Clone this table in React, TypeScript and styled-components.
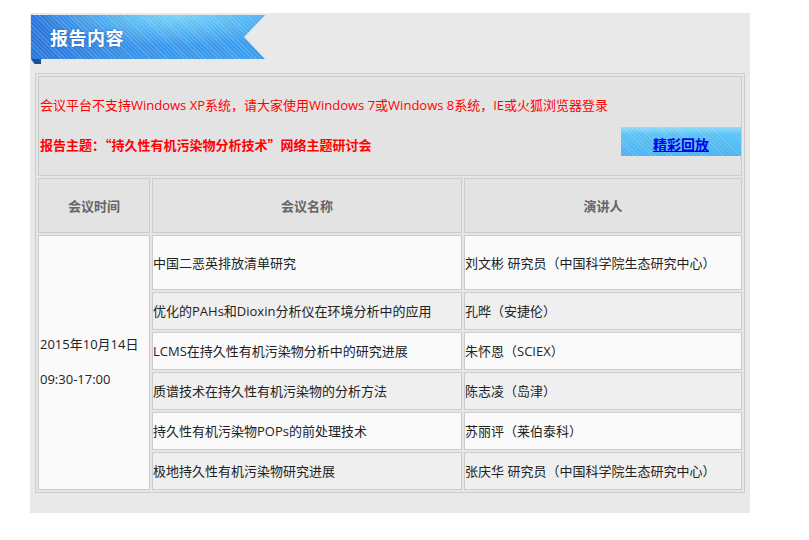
import React from "react";
import styled, { createGlobalStyle } from "styled-components";

const GlobalStyle = createGlobalStyle`
  html, body { margin: 0; padding: 0; background: #ffffff; }
  * { box-sizing: border-box; }
  body {
    font-family: "Open Sans", "Noto Sans CJK SC", sans-serif;
    font-size: 13px;
    color: #222;
  }
`;

const Page = styled.div`
  padding: 13px 0 0 30px;
`;

const Panel = styled.div`
  width: 720px;
  height: 500px;
  background: #e9e9e9;
  padding: 2px 6px 20px 1px;
`;

const RibbonWrap = styled.div`
  display: flex;
  flex-direction: column;
  margin-bottom: 9px;
`;

const Ribbon = styled.div`
  width: 234px;
  height: 44px;
  display: flex;
  align-items: center;
  padding-left: 19px;
  clip-path: polygon(0 0, 100% 0, calc(100% - 21px) 50%, 100% 100%, 0 100%);
  background:
    repeating-linear-gradient(45deg, rgba(255, 255, 255, 0.16) 0 1px, rgba(255, 255, 255, 0) 1px 3px),
    radial-gradient(ellipse 60% 70% at 62% 0%, rgba(120, 215, 250, 0.95), rgba(120, 215, 250, 0) 100%),
    linear-gradient(to right, #2b76da 0%, #3a96ea 45%, #3d9eee 100%);
`;

const RibbonTitle = styled.span`
  font-family: "Noto Sans CJK SC", sans-serif;
  color: #ffffff;
  font-size: 18px;
  font-weight: bold;
  letter-spacing: 0.5px;
  text-shadow: 0 0 2px rgba(20, 60, 140, 0.6);
`;

const Fold = styled.div`
  width: 10px;
  height: 5px;
  background: #1d4f9c;
  clip-path: polygon(0 0, 100% 0, 100% 100%, 35% 100%);
`;

const Table = styled.table`
  margin-left: 4px;
  width: 710px;
  table-layout: fixed;
  border: 1px solid #cccccc;
  border-collapse: separate;
  border-spacing: 2px;
  background: #e6e6e6;
`;

const Cell = styled.td<{ $bg?: string; $h?: number }>`
  border: 1px solid #cccccc;
  background: ${(p) => p.$bg ?? "#fafafa"};
  height: ${(p) => (p.$h ? `${p.$h}px` : "auto")};
  padding: 0;
  vertical-align: middle;
  line-height: 18px;
  color: #222;
`;

const HeadCell = styled.th`
  font-family: "Noto Sans CJK SC", sans-serif;
  border: 1px solid #cccccc;
  background: #e3e3e3;
  height: 55px;
  padding: 0;
  font-weight: bold;
  color: #666666;
  text-align: center;
  vertical-align: middle;
`;

const NoticeCell = styled.td`
  border: 1px solid #cccccc;
  background: #e3e3e3;
  height: 100px;
  padding: 19px 0 18px 1px;
  vertical-align: top;
`;

const NoticeLine = styled.div`
  color: #ff0000;
  line-height: 18px;
  margin-bottom: 13px;
`;

const TitleRow = styled.div`
  display: flex;
  justify-content: space-between;
  align-items: flex-end;
`;

const Topic = styled.div`
  font-family: "Noto Sans CJK SC", sans-serif;
  color: #ff0000;
  font-weight: bold;
  line-height: 18px;
  margin-bottom: 2px;
`;

const ReplayButton = styled.a`
  font-family: "Noto Sans CJK SC", sans-serif;
  width: 120px;
  height: 29px;
  display: flex;
  align-items: center;
  justify-content: center;
  padding-top: 4px;
  color: #0000ee;
  font-size: 14px;
  font-weight: bold;
  text-decoration: underline;
  cursor: pointer;
  background:
    repeating-linear-gradient(45deg, rgba(255, 255, 255, 0.15) 0 1px, rgba(255, 255, 255, 0) 1px 3px),
    linear-gradient(to bottom, #8edcfa 0%, #5cc2f4 25%, #4bb4f0 100%);
`;

const DateText = styled.div`
  line-height: 17.5px;
  padding-left: 1px;
`;

const sessions = [
  { title: "中国二恶英排放清单研究", speaker: "刘文彬 研究员（中国科学院生态研究中心）", h: 55 },
  { title: "优化的PAHs和Dioxin分析仪在环境分析中的应用", speaker: "孔晔（安捷伦）", h: 38 },
  { title: "LCMS在持久性有机污染物分析中的研究进展", speaker: "朱怀恩（SCIEX）", h: 38 },
  { title: "质谱技术在持久性有机污染物的分析方法", speaker: "陈志凌（岛津）", h: 38 },
  { title: "持久性有机污染物POPs的前处理技术", speaker: "苏丽评（莱伯泰科）", h: 38 },
  { title: "极地持久性有机污染物研究进展", speaker: "张庆华 研究员（中国科学院生态研究中心）", h: 38 },
];

export default function App() {
  return (
    <>
      <GlobalStyle />
      <Page>
        <Panel>
          <RibbonWrap>
            <Ribbon>
              <RibbonTitle>报告内容</RibbonTitle>
            </Ribbon>
            <Fold />
          </RibbonWrap>
          <Table>
            <colgroup>
              <col style={{ width: 112 }} />
              <col style={{ width: 310 }} />
              <col />
            </colgroup>
            <tbody>
              <tr>
                <NoticeCell colSpan={3}>
                  <NoticeLine>
                    会议平台不支持Windows XP系统，请大家使用Windows 7或Windows 8系统，IE或火狐浏览器登录
                  </NoticeLine>
                  <TitleRow>
                    <Topic>报告主题：“持久性有机污染物分析技术”网络主题研讨会</Topic>
                    <ReplayButton>精彩回放</ReplayButton>
                  </TitleRow>
                </NoticeCell>
              </tr>
              <tr>
                <HeadCell>会议时间</HeadCell>
                <HeadCell>会议名称</HeadCell>
                <HeadCell>演讲人</HeadCell>
              </tr>
              {sessions.map((s, i) => (
                <tr key={s.title}>
                  {i === 0 && (
                    <Cell rowSpan={sessions.length} $bg="#fafafa">
                      <DateText>
                        2015年10月14日
                        <br />
                        <br />
                        09:30-17:00
                      </DateText>
                    </Cell>
                  )}
                  <Cell $bg={i % 2 === 0 ? "#fafafa" : "#efefef"} $h={s.h}>
                    {s.title}
                  </Cell>
                  <Cell $bg={i % 2 === 0 ? "#fafafa" : "#efefef"} $h={s.h}>
                    {s.speaker}
                  </Cell>
                </tr>
              ))}
            </tbody>
          </Table>
        </Panel>
      </Page>
    </>
  );
}
